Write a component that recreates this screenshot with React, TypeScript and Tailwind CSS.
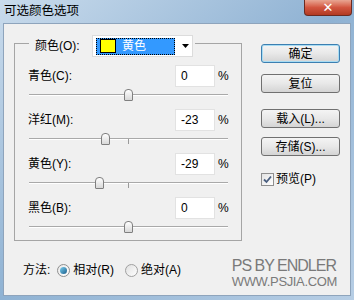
import React from "react";

const FONT = { fontFamily: '"Liberation Sans", "Noto Sans CJK SC", sans-serif' };

function Slider({ value }: { value: number }) {
  return (
    <div className="relative h-[22px]">
      <div className="absolute left-[14px] top-[7px] w-[199px] h-[2px] border-t border-[#a9a9a9] border-b border-b-white" />
      <div className="absolute left-[113px] top-[8px] w-px h-[5px] bg-[#9a9a9a]" />
      <div
        className="absolute top-[2px] w-[9px] h-[12px] rounded-t-[4px] rounded-b-[1px] border border-[#7f7f7f] bg-gradient-to-b from-[#ffffff] to-[#d8d8d8]"
        style={{ left: 109 + value }}
      />
    </div>
  );
}

function Row({ label, value }: { label: string; value: number }) {
  return (
    <div className="h-[44px]">
      <div className="flex items-center h-[22px] pl-[13px] pr-[12px]">
        <span className="flex-1 text-[12px] text-black">{label}</span>
        <div className="w-[40px] h-[22px] bg-white border border-[#e2e2e2] flex items-center pl-[5px] text-[12px] text-black">
          {value}
        </div>
        <span className="ml-[3px] w-[11px] text-[12px] text-black">%</span>
      </div>
      <Slider value={value} />
    </div>
  );
}

function Btn({ children, primary, className }: { children: React.ReactNode; primary?: boolean; className?: string }) {
  return (
    <div
      className={
        "w-[79px] h-[19px] rounded-[3px] border flex items-center justify-center text-[12px] text-black bg-gradient-to-b from-[#f4f4f4] via-[#e8e8e8] to-[#d4d4d4] " +
        (primary ? "border-[#3c7fb1] shadow-[inset_0_0_0_1px_#a8dcf3] " : "border-[#707070] ") +
        (className ?? "")
      }
    >
      {children}
    </div>
  );
}

export default function App() {
  const rows: [string, number][] = [
    ["青色(C):", 0],
    ["洋红(M):", -23],
    ["黄色(Y):", -29],
    ["黑色(B):", 0],
  ];
  return (
    <div
      className="w-[354px] h-[300px] flex flex-col bg-gradient-to-br from-[#c9dbec] via-[#8fb2d3] to-[#b7cee5]"
      style={FONT}
    >
      <div className="h-[23px] flex items-start justify-between pl-[4px]">
        <span className="mt-[3px] text-[12.5px] text-black leading-[16px]">可选颜色选项</span>
        <div className="w-[48px] h-[16px] mr-[2px] rounded-b-[4px] border border-t-0 border-[#6b2a20] bg-gradient-to-b from-[#e8a592] via-[#d2553f] to-[#b23a22] flex items-center justify-center">
          <span className="text-white font-bold text-[13px] leading-none" style={{ fontFamily: '"DejaVu Sans", sans-serif' }}>
            ✕
          </span>
        </div>
      </div>
      <div className="mx-[3px] h-[273px] bg-[#f0f0f0] border border-[#8ea4bc] flex flex-col">
        <div className="flex items-start">
          <div className="ml-[10px] mt-[19px] w-[228px] h-[198px] border border-[#a5a5a5]">
            <div className="-mt-[9px] ml-[14px] w-fit h-[22px] flex items-center bg-[#f0f0f0] pl-[6px] pr-[2px]">
              <span className="text-[12px] text-black w-[57px]">颜色(O):</span>
              <div className="w-[101px] h-[22px] bg-white border border-[#dcdcdc] flex items-center pl-[3px]">
                <div className="w-[79px] h-[17px] bg-[#3399ff] border border-dotted border-black flex items-center pl-[3px]">
                  <div className="w-[16px] h-[14px] bg-[#ffff00] border border-black" />
                  <span className="ml-[6px] text-[12px] text-white">黄色</span>
                </div>
                <svg className="ml-[7px]" width="7" height="4" viewBox="0 0 7 4">
                  <path d="M0 0H7L3.5 4Z" fill="#000" />
                </svg>
              </div>
            </div>
            <div className="mt-[8px]">
              {rows.map(([l, v]) => (
                <Row key={l} label={l} value={v} />
              ))}
            </div>
          </div>
          <div className="ml-[19px] mt-[20px] flex flex-col">
            <Btn primary>确定</Btn>
            <Btn className="mt-[11px]">复位</Btn>
            <Btn className="mt-[16px]">载入(L)...</Btn>
            <Btn className="mt-[9px]">存储(S)...</Btn>
            <div className="mt-[16px] flex items-center h-[14px]">
              <div className="w-[13px] h-[13px] border border-[#8f8f8f] bg-gradient-to-br from-[#e4e4e4] to-[#ffffff] flex items-center justify-center">
                <svg width="9" height="9" viewBox="0 0 9 9">
                  <path d="M1 4.5L3.5 7L8 1.5" stroke="#4a5f80" strokeWidth="1.8" fill="none" />
                </svg>
              </div>
              <span className="ml-[2px] text-[12px] text-black">预览(P)</span>
            </div>
          </div>
        </div>
        <div className="flex items-start">
          <div className="ml-[19px] mt-[21px] h-[16px] flex items-center text-[12px] text-black">
            <span>方法:</span>
            <div className="ml-[7px] w-[13px] h-[13px] rounded-full border border-[#8f8f8f] bg-gradient-to-br from-[#e8e8e8] to-white flex items-center justify-center">
              <div className="w-[7px] h-[7px] rounded-full bg-gradient-to-br from-[#7ad0f0] to-[#1a5f8c]" />
            </div>
            <span className="ml-[3px]">相对(R)</span>
            <div className="ml-[11px] w-[13px] h-[13px] rounded-full border border-[#a0a0a0] bg-gradient-to-br from-[#e0e0e0] to-white" />
            <span className="ml-[3px]">绝对(A)</span>
          </div>
          <div className="ml-auto mr-[13px] mt-[16px] flex flex-col text-[#7a7a7a]">
            <span className="text-[16px] leading-[17px] tracking-[-1px]">PS BY ENDLER</span>
            <span className="text-[13px] leading-[14px] tracking-[-0.35px] mt-[1px]">WWW.PSJIA.COM</span>
          </div>
        </div>
      </div>
    </div>
  );
}
